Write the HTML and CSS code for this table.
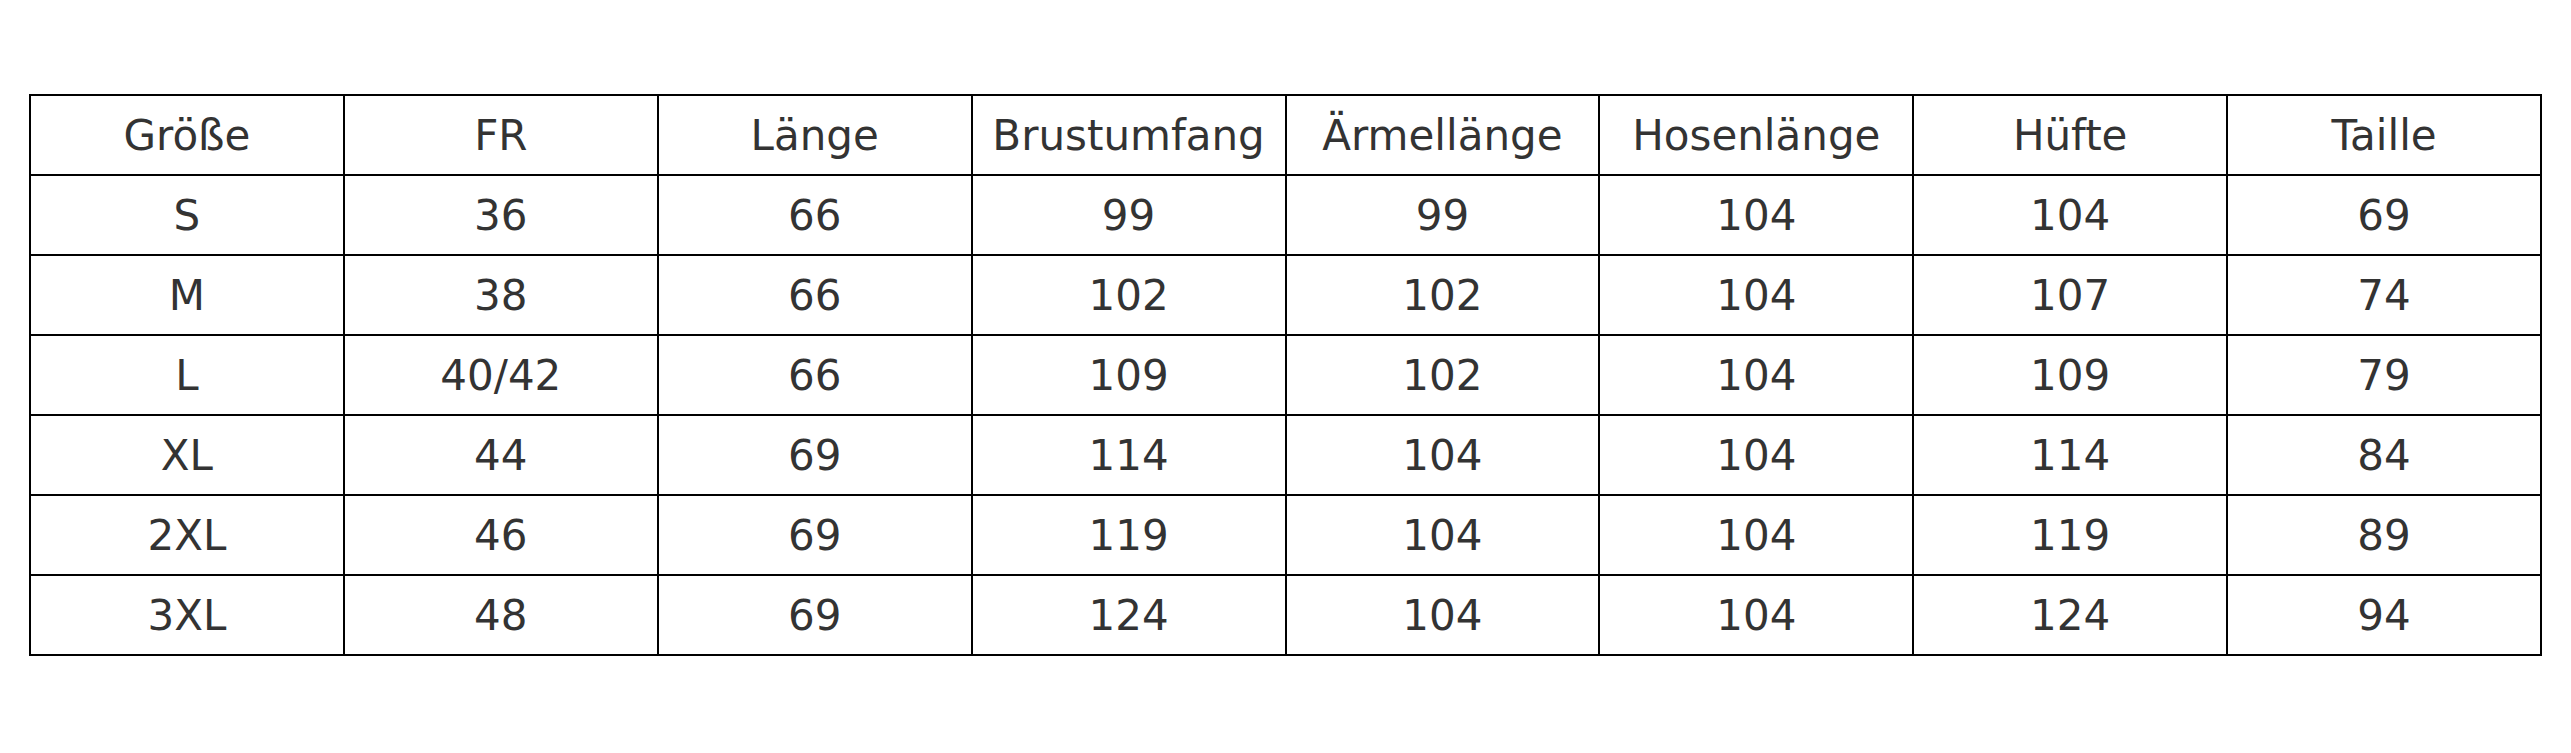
FILE: index.html
```html
<!DOCTYPE html>
<html lang="de">
<head>
<meta charset="utf-8">
<title>Größentabelle</title>
<link rel="stylesheet" href="styles.css">
</head>
<body>
<div class="page">
<table class="size-table">
<thead>
<tr><th>Größe</th><th>FR</th><th>Länge</th><th>Brustumfang</th><th>Ärmellänge</th><th>Hosenlänge</th><th>Hüfte</th><th>Taille</th></tr>
</thead>
<tbody>
<tr><td>S</td><td>36</td><td>66</td><td>99</td><td>99</td><td>104</td><td>104</td><td>69</td></tr>
<tr><td>M</td><td>38</td><td>66</td><td>102</td><td>102</td><td>104</td><td>107</td><td>74</td></tr>
<tr><td>L</td><td>40/42</td><td>66</td><td>109</td><td>102</td><td>104</td><td>109</td><td>79</td></tr>
<tr><td>XL</td><td>44</td><td>69</td><td>114</td><td>104</td><td>104</td><td>114</td><td>84</td></tr>
<tr><td>2XL</td><td>46</td><td>69</td><td>119</td><td>104</td><td>104</td><td>119</td><td>89</td></tr>
<tr><td>3XL</td><td>48</td><td>69</td><td>124</td><td>104</td><td>104</td><td>124</td><td>94</td></tr>
</tbody>
</table>
</div>
</body>
</html>
```
FILE: styles.css
```css
html, body {
  margin: 0;
  padding: 0;
  background: #ffffff;
}
.page {
  padding: 94px 0 0 29px;
}
.size-table {
  border-collapse: collapse;
  table-layout: fixed;
  width: 2513px;
  font-family: "DejaVu Sans", sans-serif;
  font-size: 42px;
  color: #333333;
}
.size-table th,
.size-table td {
  border: 2px solid #000000;
  height: 78px;
  padding: 0;
  text-align: center;
  vertical-align: middle;
  font-weight: normal;
}
```
